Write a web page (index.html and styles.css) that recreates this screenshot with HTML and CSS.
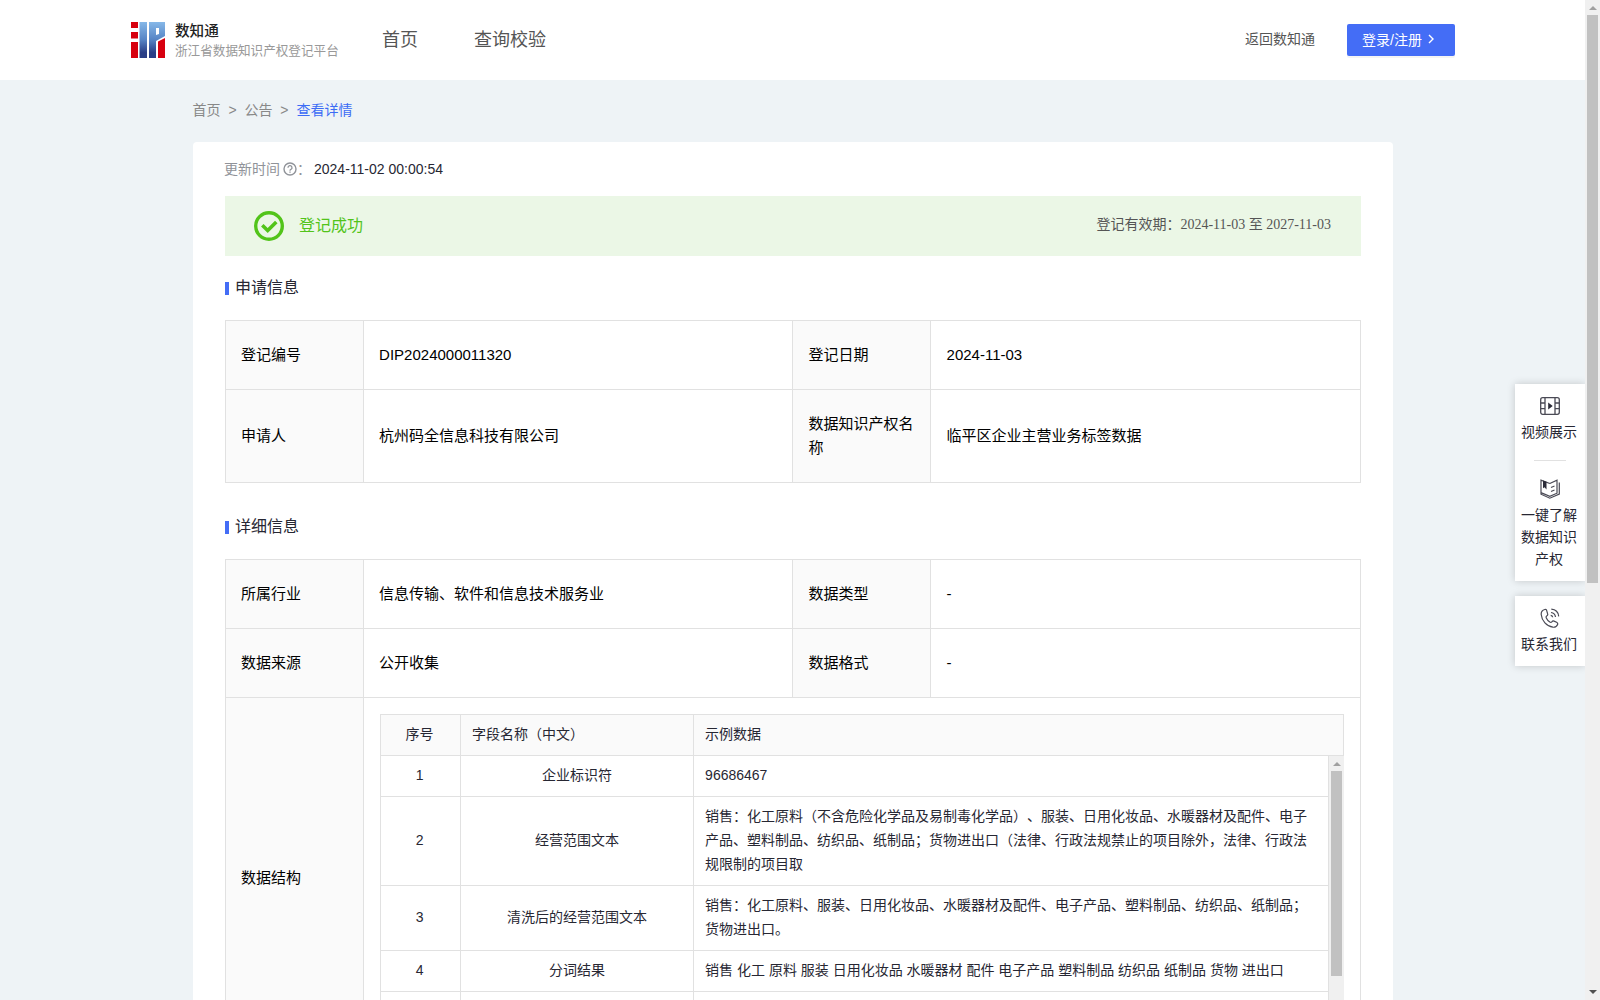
FILE: index.html
```html
<!DOCTYPE html>
<html lang="zh-CN">

<head>
    <meta charset="UTF-8">
    <meta name="viewport" content="width=device-width, initial-scale=1.0">
    <title>浙江省数据知识产权登记平台</title>
    <link rel="stylesheet" href="styles.css">
</head>

<body>
    <div class="page">
        <header class="header">
            <svg class="logo" viewBox="0 0 34 36">
                <defs>
                    <linearGradient id="blue" gradientUnits="userSpaceOnUse" x1="0" y1="0" x2="0" y2="36">
                        <stop offset="0" stop-color="#86b8e8"/>
                        <stop offset="0.5" stop-color="#5583c4"/>
                        <stop offset="0.85" stop-color="#2a3f87"/>
                        <stop offset="1" stop-color="#2a3f87"/>
                    </linearGradient>
                </defs>
                <path fill="#d7000f" d="M0 0h7v6H0zM0 10h7v6.500H0zM0 20h7v16H0zM27 19.500l7-3.500v20h-7z"/>
                <path fill="url(#blue)" d="M8.500 0h7.500v36H8.500z"/>
                <path fill="url(#blue)" fill-rule="evenodd" d="M18 0h16v14l-9 5v17h-7zM25 6v7l3-1V6z"/>
            </svg>
            <div class="brand">
                <div class="brand-name">数知通</div>
                <div class="brand-sub">浙江省数据知识产权登记平台</div>
            </div>
            <nav class="nav">
                <a>首页</a>
                <a>查询校验</a>
            </nav>
            <a class="back">返回数知通</a>
            <button class="login">登录/注册
                <svg viewBox="0 0 8 10"><path d="M2 1l4 4-4 4" fill="none" stroke="#fff" stroke-width="1.4"/></svg>
            </button>
        </header>

        <div class="breadcrumb">
            <span>首页</span><i>&gt;</i><span>公告</span><i>&gt;</i><span class="current">查看详情</span>
        </div>

        <main class="card">
            <div class="update">
                更新时间<svg viewBox="0 0 14 14">
                    <circle cx="7" cy="7" r="6" fill="none" stroke="#909399" stroke-width="1.4"/>
                    <path d="M5 5.700a2 2 0 1 1 2.900 1.700q-.9.400-.9 1.300M7 9.500v1.200" fill="none" stroke="#909399" stroke-width="1.300"/>
                </svg><span class="colon">：</span>
                <span class="update-value">2024-11-02 00:00:54</span>
            </div>

            <div class="banner">
                <svg viewBox="0 0 30 30">
                    <circle cx="15" cy="15" r="13.300" fill="none" stroke="#52c41a" stroke-width="3.400"/>
                    <path d="M8.300 14.300l5.400 5.200 8.600-8.500" fill="none" stroke="#52c41a" stroke-width="3.600"/>
                </svg>
                <span class="banner-status">登记成功</span>
                <span class="banner-date">登记有效期：2024-11-03 至 2027-11-03</span>
            </div>

            <h2 class="section-title">申请信息</h2>
            <table class="info">
                <colgroup><col class="c1"><col class="c2"><col class="c3"><col class="c4"></colgroup>
                <tr class="row">
                    <th>登记编号</th>
                    <td>DIP2024000011320</td>
                    <th>登记日期</th>
                    <td>2024-11-03</td>
                </tr>
                <tr class="row-tall">
                    <th>申请人</th>
                    <td>杭州码全信息科技有限公司</td>
                    <th>数据知识产权名称</th>
                    <td>临平区企业主营业务标签数据</td>
                </tr>
            </table>

            <h2 class="section-title second">详细信息</h2>
            <table class="info">
                <colgroup><col class="c1"><col class="c2"><col class="c3"><col class="c4"></colgroup>
                <tr class="row">
                    <th>所属行业</th>
                    <td>信息传输、软件和信息技术服务业</td>
                    <th>数据类型</th>
                    <td>-</td>
                </tr>
                <tr class="row">
                    <th>数据来源</th>
                    <td>公开收集</td>
                    <th>数据格式</th>
                    <td>-</td>
                </tr>
                <tr class="row-fields">
                    <th>数据结构</th>
                    <td colspan="3">
                        <div class="fields">
                            <div class="fields-row fields-head">
                                <div class="num">序号</div>
                                <div class="name">字段名称（中文）</div>
                                <div class="sample">示例数据</div>
                            </div>
                            <div class="fields-body">
                                <div class="fields-list">
                                    <div class="fields-row">
                                        <div class="num">1</div>
                                        <div class="name">企业标识符</div>
                                        <div class="sample">96686467</div>
                                    </div>
                                    <div class="fields-row">
                                        <div class="num">2</div>
                                        <div class="name">经营范围文本</div>
                                        <div class="sample">销售：化工原料（不含危险化学品及易制毒化学品）、服装、日用化妆品、水暖器材及配件、电子<br>产品、塑料制品、纺织品、纸制品；货物进出口（法律、行政法规禁止的项目除外，法律、行政法<br>规限制的项目取</div>
                                    </div>
                                    <div class="fields-row">
                                        <div class="num">3</div>
                                        <div class="name">清洗后的经营范围文本</div>
                                        <div class="sample">销售：化工原料、服装、日用化妆品、水暖器材及配件、电子产品、塑料制品、纺织品、纸制品；<br>货物进出口。</div>
                                    </div>
                                    <div class="fields-row">
                                        <div class="num">4</div>
                                        <div class="name">分词结果</div>
                                        <div class="sample">销售 化工 原料 服装 日用化妆品 水暖器材 配件 电子产品 塑料制品 纺织品 纸制品 货物 进出口</div>
                                    </div>
                                    <div class="fields-row">
                                        <div class="num"></div>
                                        <div class="name"></div>
                                        <div class="sample"></div>
                                    </div>
                                </div>
                                <div class="scrollbar">
                                    <div class="arrow-up"></div>
                                    <div class="thumb thumb-inner"></div>
                                </div>
                            </div>
                        </div>
                    </td>
                </tr>
            </table>
        </main>

        <aside class="side">
            <div class="side-box">
                <div class="side-item">
                    <svg viewBox="0 0 20 20" fill="none" stroke="#4a4a55" stroke-width="1.300">
                        <rect x="0.700" y="1.700" width="18.600" height="16.600" rx="2"/>
                        <path d="M5 1.700v16.600M15 1.700v16.600M.7 7H5M.7 12.700H5M15 7h4.300M15 12.700h4.300"/>
                        <path d="M8.200 6.500v7l4.500-3.500z" fill="#2b2b38" stroke="none"/>
                    </svg>
                    <p>视频展示</p>
                </div>
                <div class="side-line"></div>
                <div class="side-item">
                    <svg viewBox="0 0 20 20" fill="none" stroke="#4a4a55" stroke-width="1.200">
                        <path d="M9.800 4.500L1 1.200v14l8.800 4 9.500-4.200V3.500M9.800 4.500l7.200-3.300v13l-7.200 3.200L1 13.600"/>
                        <path d="M11 8.500l3.500-1.500M11 12.500l3.500-1.500"/>
                        <path d="M3 1.500v7.700l1.500-1 2 2.300V2.800z" fill="#2b2b38" stroke="none"/>
                    </svg>
                    <p>一键了解数据知识产权</p>
                </div>
            </div>
            <div class="side-box contact">
                <div class="side-item">
                    <svg viewBox="0 0 20 20" fill="none" stroke="#4a4a55" stroke-width="1.200">
                        <path d="M4.800 1.500C2.500 2.200 1 4.200 1.200 6.500c.5 6.200 5.500 11.800 11.700 12.700 2 .2 4-.9 4.700-2.700.4-1-.1-1.700-1-2.200l-2.600-1.200c-1-.4-1.600 0-2.200.8-.6.700-1.200.7-2 .2C8.200 13 7 11.500 6.300 10c-.4-.9-.3-1.500.4-2 1-.6 1.300-1.300.9-2.300L6.700 2.600C6.400 1.600 5.800 1.200 4.800 1.500z"/>
                        <path d="M11 4.500c2.500.3 4.200 2 4.500 4.500M11.300 1.200c4.200.3 7 3 7.400 7.200M10.700 7.300c1.200.2 1.900.9 2 2"/>
                    </svg>
                    <p>联系我们</p>
                </div>
            </div>
        </aside>
    </div>

    <div class="scrollbar">
        <div class="arrow-up"></div>
        <div class="thumb"></div>
        <div class="arrow-down"></div>
    </div>
</body>

</html>
```

FILE: styles.css
```css
* {
    box-sizing: border-box;
}

body {
    margin: 0;
    height: 1000px;
    display: flex;
    overflow: hidden;
    font-family: "Liberation Sans", "Noto Sans CJK SC", sans-serif;
    font-size: 14px;
    line-height: 24px;
    text-spacing-trim: space-all;
    color: #272733;
    background-color: #eef3f6;
}

.page {
    width: 1585px;
    height: 1000px;
    overflow: hidden;
    position: relative;
}

/* header */
.header {
    height: 80px;
    background-color: #fff;
    display: flex;
    align-items: center;
    padding: 0 130px 0 131px;
    color: #555;
}

.logo {
    width: 34px;
    height: 36px;
}

.brand {
    width: 207px;
    padding: 2px 0 0 10px;
}

.brand-name {
    font-size: 14.6px;
    font-weight: 500;
    line-height: 20px;
    color: #222;
}

.brand-sub {
    font-size: 12.6px;
    line-height: 20px;
    color: #999;
    white-space: nowrap;
}

.nav {
    display: flex;
    gap: 56px;
    padding-left: 10px;
    font-size: 18px;
}

.back {
    margin-left: auto;
    margin-right: 32px;
    padding-bottom: 2px;
}

.login {
    width: 108px;
    height: 32px;
    padding: 0 0 2px 15px;
    display: flex;
    align-items: center;
    border: none;
    border-radius: 2px;
    background-color: #446df6;
    box-shadow: 0 2px 0 rgba(0, 0, 0, 0.045);
    color: #fff;
    font-family: inherit;
    font-size: 14px;
}

.login svg {
    width: 8px;
    height: 10px;
    margin-left: 5px;
}

.breadcrumb {
    height: 62px;
    padding: 18px 0 0 192.5px;
    color: #888;
}

.breadcrumb i {
    font-style: normal;
    margin: 0 7.9px;
}

.breadcrumb .current {
    color: #3c6cf5;
}

/* main card */
.card {
    width: 1200px;
    height: 1000px;
    margin-left: 193px;
    padding: 14px 32px 0;
    background-color: #fff;
    border-radius: 4px;
}

.update {
    height: 40px;
    margin-left: -1px;
    line-height: 26px;
    display: flex;
    color: #909399;
}

.update svg {
    width: 14px;
    height: 14px;
    margin: 6px 0 0 3px;
}

.colon {
    width: 17px;
    overflow: hidden;
}

.update-value {
    color: #272733;
}

.banner {
    height: 60px;
    padding: 0 30px 0 29px;
    display: flex;
    align-items: center;
    background-color: #ebf7e6;
}

.banner svg {
    width: 30px;
    height: 30px;
}

.banner-status {
    margin-left: 15px;
    padding-bottom: 1px;
    font-size: 16px;
    color: #52c41a;
}

.banner-date {
    margin-left: auto;
    padding-bottom: 2px;
    font-family: "Liberation Serif", "Noto Sans CJK SC", serif;
    color: #555;
}

.section-title {
    margin: 20px 0;
    height: 24px;
    display: flex;
    align-items: center;
    font-size: 16px;
    font-weight: normal;
}

.section-title::before {
    content: "";
    width: 4px;
    height: 13px;
    margin: 1px 6px 0 0;
    background-color: #446df6;
}

.section-title.second {
    margin-top: 32px;
}

.info {
    width: 1136px;
    table-layout: fixed;
    border-collapse: collapse;
    font-size: 15px;
    color: #000;
}

.info .c1 {
    width: 138px;
}

.info .c3 {
    width: 137px;
}

.info .c2 {
    width: 429px;
}

.info .c4 {
    width: 430px;
}

.info th,
.info td {
    border: 1px solid #e1e1e1;
    padding: 0 15px 1px;
    text-align: left;
    font-weight: normal;
}

.info th {
    background-color: #fafafa;
}

.info th + td:last-child {
    padding-left: 16px;
}

.row {
    height: 69px;
}

.row-tall {
    height: 93px;
}

.row-fields {
    height: 362px;
}

/* field list inside the table */
.fields {
    height: 329px;
    width: 964px;
    border: 1px solid #e1e1e1;
    border-right: none;
    overflow: hidden;
    font-size: 14px;
    color: #272733;
}

.fields-row {
    display: flex;
    min-height: 41px;
    border-bottom: 1px solid #e1e1e1;
}

.fields-row > div {
    display: flex;
    align-items: center;
    border-right: 1px solid #e1e1e1;
    padding-bottom: 1px;
}

.fields-row .num {
    width: 80px;
    padding-right: 2px;
    justify-content: center;
}

.fields-row .name {
    width: 233px;
    justify-content: center;
}

.fields-row .sample {
    flex: 1;
    padding: 7px 0 9px 11px;
    white-space: nowrap;
}

.fields-head {
    background-color: #fafafa;
}

.fields-row.fields-head .name {
    justify-content: flex-start;
    padding-left: 11px;
}

.fields-body {
    display: flex;
    height: 290px;
}

.fields-list {
    width: 948px;
}

/* scrollbars */
.scrollbar {
    width: 15px;
    background-color: #f0f0f0;
    display: flex;
    flex-direction: column;
    align-items: center;
}

.arrow-up {
    height: 15px;
    padding-top: 6px;
}

.arrow-up::before,
.arrow-down::before {
    content: "";
    display: block;
    border: 4px solid transparent;
    border-top: none;
    border-bottom-color: #a0a0a0;
}

.thumb {
    width: 11px;
    height: 568px;
    background-color: #c1c1c1;
}

.thumb-inner {
    height: 205px;
}

.arrow-down {
    height: 15px;
    margin-top: auto;
    padding-top: 5px;
}

.arrow-down::before {
    border: 4px solid transparent;
    border-bottom: none;
    border-top-color: #505050;
}

/* floating menu on the right edge */
.side {
    position: absolute;
    top: 384px;
    right: 0;
    width: 70px;
}

.side-box {
    height: 197px;
    margin-bottom: 15px;
    padding-top: 12px;
    background-color: #fff;
    box-shadow: 0 0 8px rgba(0, 0, 0, 0.18);
}

.side-box.contact {
    height: 70px;
}

.side-item {
    text-align: center;
}

.side-item svg {
    display: block;
    width: 20px;
    height: 20px;
    margin: 0 auto;
}

.side-item p {
    margin: 5px 8px 0 6px;
    line-height: 22px;
}

.side-line {
    width: 32px;
    height: 1px;
    margin: 17px auto 18px;
    background-color: #e1e1e1;
}
```
